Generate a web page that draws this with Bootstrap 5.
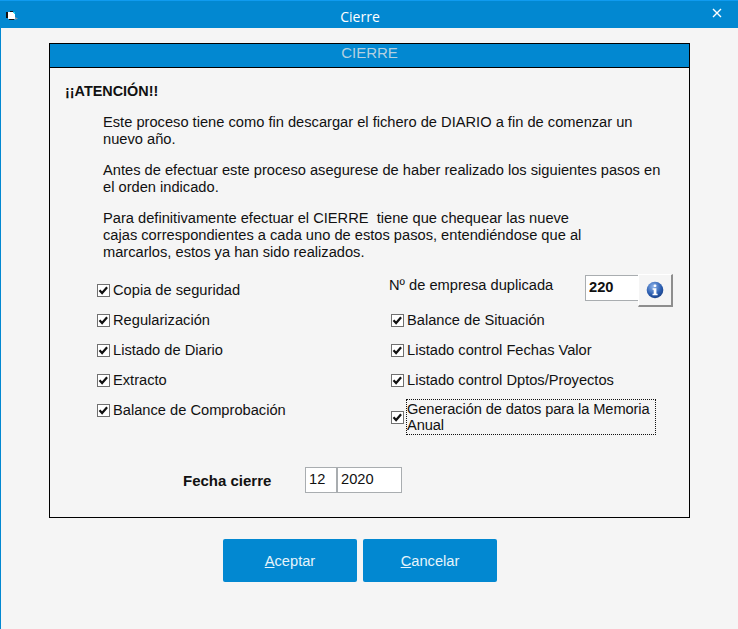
<!DOCTYPE html>
<html lang="es">
<head>
<meta charset="utf-8">
<title>Cierre</title>
<link href="https://cdn.jsdelivr.net/npm/bootstrap@5.3.0/dist/css/bootstrap.min.css" rel="stylesheet">
<style>
html,body{margin:0;height:100%;background:#f5f5f5;}
body{font-family:"Liberation Sans",Arial,sans-serif;font-size:14.67px;line-height:17px;color:#111;overflow:hidden;}
.win{width:738px;height:629px;background:#f5f5f5;border-left:1px solid #0288d1;display:flex;flex-direction:column;}
.tbar{height:28px;background:#0288d1;border-top:1px solid #0f9bf0;margin:0 0 0 -1px;padding-right:18px;position:relative;color:#fff;font-family:"Open Sans",sans-serif;font-size:14px;line-height:31px;text-align:center;flex:none;}
.tico{position:absolute;left:6px;top:10px;width:12px;height:10px;}
.tx{position:absolute;right:16px;top:7px;width:10px;height:10px;}
.panel{width:641px;height:475px;margin:15px 0 0 48px;border:1px solid #000;flex:none;display:flex;flex-direction:column;}
.phead{height:24px;background:#0288d1;border-bottom:1px solid #000;color:#b4d0e0;font-size:15px;line-height:18px;text-align:center;flex:none;}
.pbody{padding:15px 0 0 15px;}
.atn{font-weight:700;font-size:14.4px;line-height:17px;margin-bottom:14px;}
.para{margin:0 0 14px 38px;width:570px;}
.checks{display:grid;grid-template-columns:294px 1fr;grid-auto-rows:30px;margin-left:32px;}
.ck{display:flex;align-items:center;gap:3px;margin:0;}
.form-check-input.box,.form-check-input.box:checked[type=checkbox]{width:13px;height:13px;margin:0;flex:none;float:none;border:1px solid #707070;border-radius:0;background-color:#fff;opacity:1;--bs-form-check-bg-image:url("data:image/svg+xml,%3csvg xmlns='http://www.w3.org/2000/svg' viewBox='0 0 13 13'%3e%3cpath fill='none' stroke='%23111' stroke-width='2.2' d='M2.5 6.2l2.6 2.8 5-5.8'/%3e%3c/svg%3e");background-size:13px 13px;box-shadow:none;}
.numrow{display:flex;align-items:flex-start;margin-left:-2px;}
.numlbl{width:196px;padding-top:2px;}
.tb{border:1px solid #a9adb0;background:#fff;color:#111;font:14.67px/17px "Liberation Sans",Arial,sans-serif;height:26px;padding:0 0 2px 3px;border-radius:0;outline:0;}
.tb-num{width:55px;font-weight:700;}
.infobtn{width:35px;height:33px;background:#f5f5f5;border:0;border-top:1px solid #fff;border-left:1px solid #fff;border-right:2px solid #8e8e8e;border-bottom:2px solid #8e8e8e;margin:-1px 0 0 -2px;padding:0;display:flex;align-items:center;justify-content:center;}
.ck-tall{align-self:start;margin-top:4px;}
.focusbox{border:1px dotted #111;width:250px;height:36px;margin-left:-1px;padding:1px 0 0;line-height:16px;display:block;letter-spacing:-.1px;}
.fecha{display:flex;align-items:center;margin:42px 0 0 118px;}
.fl{font-weight:700;font-size:15px;width:122px;}
.tb-m{width:32px;}
.tb-y{width:65px;}
.acts{display:flex;gap:6px;margin:21px 0 0 222px;}
.btn.act{width:134px;height:43px;background:#0288d1;border:0;border-radius:2px;color:#e6f4fb;font-size:14.67px;line-height:45px;padding:0;}
</style>
</head>
<body>
<div class="win">
  <div class="tbar">
    <svg class="tico" viewBox="0 0 12 10"><path fill="#fff" d="M1 1h6l1 1h1v6h-7V7H1z"/><path fill="#111" d="M0 1h2v6H0zM3 8h5v1H3zM4 0h3v1H4z"/><path fill="#22d3ee" d="M7 1h2v2H8V2H7z"/><path fill="#8d9aa5" d="M9 6l3 1.500-3 1.500z"/></svg>
    Cierre
    <svg class="tx" viewBox="0 0 10 10"><path stroke="#fff" stroke-width="1.4" d="M1 1l8 8M9 1l-8 8"/></svg>
  </div>
  <div class="panel">
    <div class="phead">CIERRE</div>
    <div class="pbody">
      <div class="atn">¡¡ATENCIÓN!!</div>
      <p class="para">Este proceso tiene como fin descargar el fichero de DIARIO a fin de comenzar un nuevo año.</p>
      <p class="para">Antes de efectuar este proceso asegurese de haber realizado los siguientes pasos en el orden indicado.</p>
      <p class="para">Para definitivamente efectuar el CIERRE&nbsp; tiene que chequear las nueve<br>cajas correspondientes a cada uno de estos pasos, entendiéndose que al<br>marcarlos, estos ya han sido realizados.</p>
      <div class="checks">
        <label class="ck"><input class="form-check-input box" type="checkbox" checked>Copia de seguridad</label>
        <div class="numrow"><span class="numlbl">Nº de empresa duplicada</span><input class="tb tb-num" value="220" aria-label="Nº de empresa duplicada"><button class="infobtn" type="button" aria-label="Información"><svg width="18" height="18" viewBox="0 0 18 18"><defs><radialGradient id="g" cx=".4" cy=".3" r=".8"><stop offset="0" stop-color="#8fb4ea"/><stop offset=".6" stop-color="#2a5db0"/><stop offset="1" stop-color="#173a7c"/></radialGradient></defs><circle cx="9" cy="9" r="8.300" fill="url(#g)"/><rect x="7.600" y="3.400" width="2.800" height="2.600" rx="1" fill="#fff"/><path fill="#fff" d="M6.600 7.200h3.800v5.600h1.200v1.500H6.500v-1.500h1.200V8.700H6.600z"/></svg></button></div>
        <label class="ck"><input class="form-check-input box" type="checkbox" checked>Regularización</label>
        <label class="ck"><input class="form-check-input box" type="checkbox" checked>Balance de Situación</label>
        <label class="ck"><input class="form-check-input box" type="checkbox" checked>Listado de Diario</label>
        <label class="ck"><input class="form-check-input box" type="checkbox" checked>Listado control Fechas Valor</label>
        <label class="ck"><input class="form-check-input box" type="checkbox" checked>Extracto</label>
        <label class="ck"><input class="form-check-input box" type="checkbox" checked>Listado control Dptos/Proyectos</label>
        <label class="ck"><input class="form-check-input box" type="checkbox" checked>Balance de Comprobación</label>
        <label class="ck ck-tall"><input class="form-check-input box" type="checkbox" checked><span class="focusbox">Generación de datos para la Memoria Anual</span></label>
      </div>
      <div class="fecha"><span class="fl">Fecha cierre</span><input class="tb tb-m" value="12" aria-label="Mes"><input class="tb tb-y" value="2020" aria-label="Año"></div>
    </div>
  </div>
  <div class="acts">
    <button class="btn act" type="button"><u>A</u>ceptar</button>
    <button class="btn act" type="button"><u>C</u>ancelar</button>
  </div>
</div>
<script src="https://cdn.jsdelivr.net/npm/bootstrap@5.3.0/dist/js/bootstrap.bundle.min.js"></script>
</body>
</html>
